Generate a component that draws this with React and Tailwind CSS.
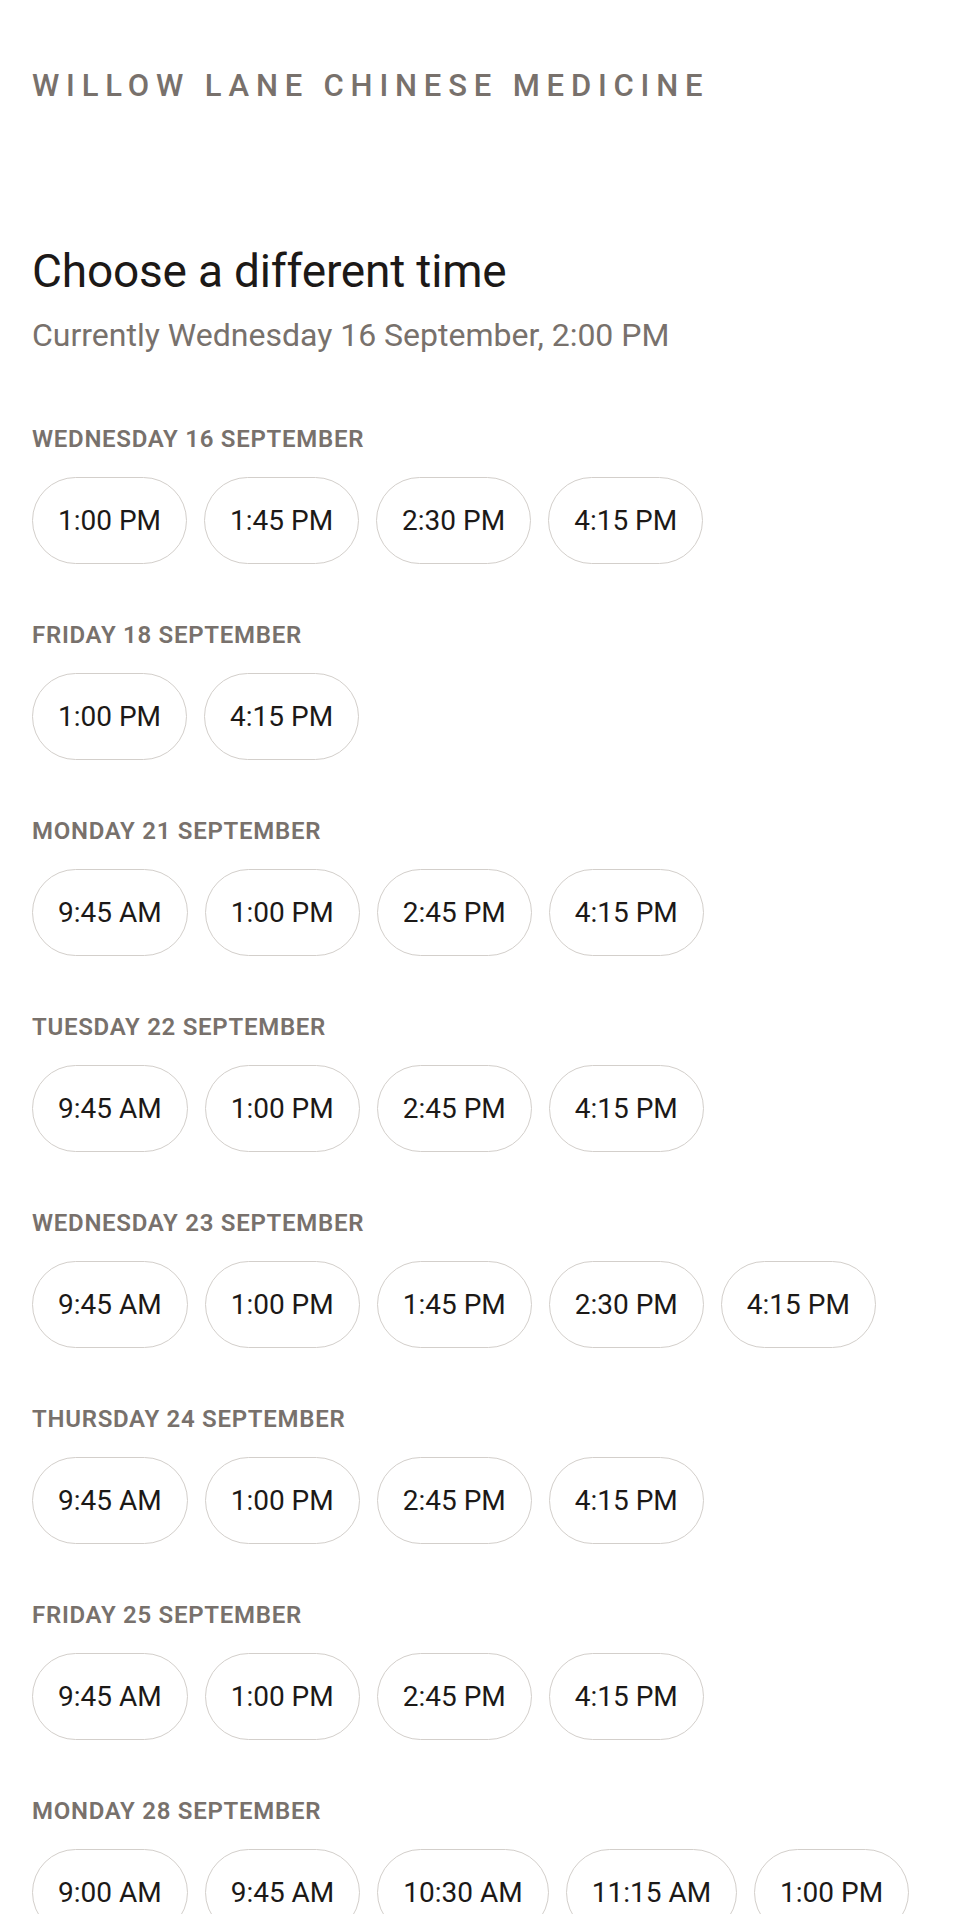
const days = [
  { label: "Wednesday 16 September", times: ["1:00 PM", "1:45 PM", "2:30 PM", "4:15 PM"] },
  { label: "Friday 18 September", times: ["1:00 PM", "4:15 PM"] },
  { label: "Monday 21 September", times: ["9:45 AM", "1:00 PM", "2:45 PM", "4:15 PM"] },
  { label: "Tuesday 22 September", times: ["9:45 AM", "1:00 PM", "2:45 PM", "4:15 PM"] },
  { label: "Wednesday 23 September", times: ["9:45 AM", "1:00 PM", "1:45 PM", "2:30 PM", "4:15 PM"] },
  { label: "Thursday 24 September", times: ["9:45 AM", "1:00 PM", "2:45 PM", "4:15 PM"] },
  { label: "Friday 25 September", times: ["9:45 AM", "1:00 PM", "2:45 PM", "4:15 PM"] },
  { label: "Monday 28 September", times: ["9:00 AM", "9:45 AM", "10:30 AM", "11:15 AM", "1:00 PM"] },
];

const TimeSlot = ({ time }) => (
  <button className="h-[87px] px-[25px] rounded-full border-[1.5px] border-[#d3cfcb] bg-white text-[28px] leading-none text-[#1c1917] flex items-center">
    {time}
  </button>
);

const App = () => {
  return (
    <div className="min-h-screen bg-white font-['Roboto',sans-serif] px-[32px] pt-[68px] pb-10">
      <div className="text-[31px] leading-[35px] font-medium uppercase tracking-[0.22em] text-[#78716c]">
        Willow Lane Chinese Medicine
      </div>

      <h1 className="mt-[141px] text-[46px] leading-[55px] font-normal tracking-[-0.2px] text-[#1c1917]">
        Choose a different time
      </h1>
      <p className="mt-[15px] text-[32px] leading-[42px] text-[#78716c]">
        Currently Wednesday 16 September, 2:00 PM
      </p>

      <div className="mt-[68px] flex flex-col gap-[56px]">
        {days.map((day) => (
          <div key={day.label}>
            <h2 className="text-[24px] leading-[30px] font-semibold uppercase tracking-[0.03em] text-[#78716c]">
              {day.label}
            </h2>
            <div className="mt-[23px] flex flex-wrap gap-[17px]">
              {day.times.map((t, i) => (
                <TimeSlot key={i} time={t} />
              ))}
            </div>
          </div>
        ))}
      </div>
    </div>
  );
};

export default App;
